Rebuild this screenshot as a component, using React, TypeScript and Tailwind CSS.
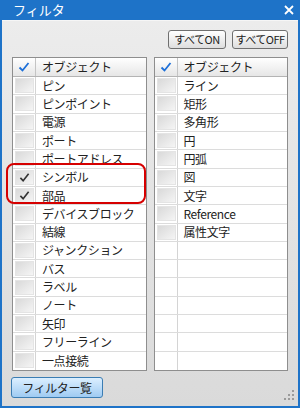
import React from 'react';

const leftItems: { label: string; checked?: boolean }[] = [
  { label: 'ピン' },
  { label: 'ピンポイント' },
  { label: '電源' },
  { label: 'ポート' },
  { label: 'ポートアドレス' },
  { label: 'シンボル', checked: true },
  { label: '部品', checked: true },
  { label: 'デバイスブロック' },
  { label: '結線' },
  { label: 'ジャンクション' },
  { label: 'バス' },
  { label: 'ラベル' },
  { label: 'ノート' },
  { label: '矢印' },
  { label: 'フリーライン' },
  { label: '一点接続' },
];

const rightItems: { label: string; checked?: boolean }[] = [
  { label: 'ライン' },
  { label: '矩形' },
  { label: '多角形' },
  { label: '円' },
  { label: '円弧' },
  { label: '図' },
  { label: '文字' },
  { label: 'Reference' },
  { label: '属性文字' },
];

const font = "font-['Noto_Sans_CJK_JP','Noto_Sans',sans-serif]";

const Check: React.FC<{ className: string }> = ({ className }) => (
  <svg viewBox="0 0 12 12" className={className}>
    <path d="M1.5 6.5 L4.5 9.5 L10.5 2" fill="none" stroke="currentColor" strokeWidth="1.8" />
  </svg>
);

const FilterTable: React.FC<{ items: { label: string; checked?: boolean }[] }> = ({ items }) => {
  const rows = Array.from({ length: 16 }, (_, i) => items[i]);
  return (
    <div className="flex-1 border border-[#8e8e8e] bg-white flex flex-col">
      <div className="h-[19px] flex border-b border-[#b4b4b4] bg-gradient-to-b from-[#ffffff] to-[#e6e6e6]">
        <div className="w-[23px] border-r border-[#c4c4c4] flex items-center justify-center">
          <Check className="w-[12px] h-[12px] text-[#1c6fd8]" />
        </div>
        <div className="flex-1 pl-[6px] flex items-center text-[12px] tracking-[-0.4px] text-[#222]">オブジェクト</div>
      </div>
      {rows.map((item, i) => (
        <div key={i} className="h-[18.33px] flex border-b border-[#dcdcdc] last:border-b-0">
          <div className="w-[23px] border-r border-[#d4d4d4] flex items-center pl-[2px]">
            {item && (
              <div className="w-[19px] h-[15px] bg-gradient-to-br from-[#d9d9d9] to-[#f5f5f5] border border-[#e4e4e4] flex items-center justify-center">
                {item.checked && <Check className="w-[11px] h-[11px] text-[#333]" />}
              </div>
            )}
          </div>
          <div className="flex-1 pl-[6px] flex items-center text-[12px] tracking-[-0.4px] text-[#222] leading-none whitespace-nowrap">
            {item?.label}
          </div>
        </div>
      ))}
    </div>
  );
};

const App: React.FC = () => {
  return (
    <div className={`relative w-[300px] h-[408px] bg-[#1e73c8] flex flex-col ${font}`}>
      <div className="h-[20px] flex items-center justify-between pl-[13px] pr-[6px] text-white text-[13px]">
        <span>フィルタ</span>
        <svg viewBox="0 0 10 10" className="w-[10px] h-[10px]">
          <path d="M1 1 L9 9 M9 1 L1 9" stroke="white" strokeWidth="1.8" />
        </svg>
      </div>
      <div className="flex-1 mx-[2px] mb-[2px] border-t border-[#f6f6f6] bg-gradient-to-b from-[#ececec] to-[#dadada] flex flex-col">
        <div className="flex justify-end gap-[6px] pt-[9px] pr-[10px]">
          <button className="h-[19px] w-[58px] border border-[#6f6f6f] rounded-[3px] bg-gradient-to-b from-[#ffffff] to-[#dedede] text-[11px] tracking-[-0.5px] text-[#222] leading-none whitespace-nowrap">
            すべてON
          </button>
          <button className="h-[19px] w-[56px] border border-[#6f6f6f] rounded-[3px] bg-gradient-to-b from-[#ffffff] to-[#dedede] text-[11px] tracking-[-0.5px] text-[#222] leading-none whitespace-nowrap">
            すべてOFF
          </button>
        </div>
        <div className="flex gap-[7px] mt-[8px] px-[10px] h-[314px]">
          <FilterTable items={leftItems} />
          <FilterTable items={rightItems} />
        </div>
        <div className="flex items-end justify-between pl-[9px] pr-[4px] mt-[6px]">
          <button className="h-[21px] w-[92px] border border-[#3b7db3] rounded-[3px] bg-gradient-to-b from-[#dcefff] to-[#9fcbf2] text-[12px] tracking-[-0.4px] text-[#222] leading-none whitespace-nowrap">
            フィルター覧
          </button>
          <div className="grid grid-cols-3 gap-[2px] mb-[-2px]">
            <span className="w-[2px] h-[2px]" />
            <span className="w-[2px] h-[2px]" />
            <span className="w-[2px] h-[2px] bg-[#9a9a9a]" />
            <span className="w-[2px] h-[2px]" />
            <span className="w-[2px] h-[2px] bg-[#9a9a9a]" />
            <span className="w-[2px] h-[2px] bg-[#9a9a9a]" />
            <span className="w-[2px] h-[2px] bg-[#9a9a9a]" />
            <span className="w-[2px] h-[2px] bg-[#9a9a9a]" />
            <span className="w-[2px] h-[2px] bg-[#9a9a9a]" />
          </div>
        </div>
      </div>
      <div className="absolute left-[6px] top-[163px] w-[140px] h-[41px] border-[2.5px] border-[#d60000] rounded-[8px]" />
    </div>
  );
};

export default App;
